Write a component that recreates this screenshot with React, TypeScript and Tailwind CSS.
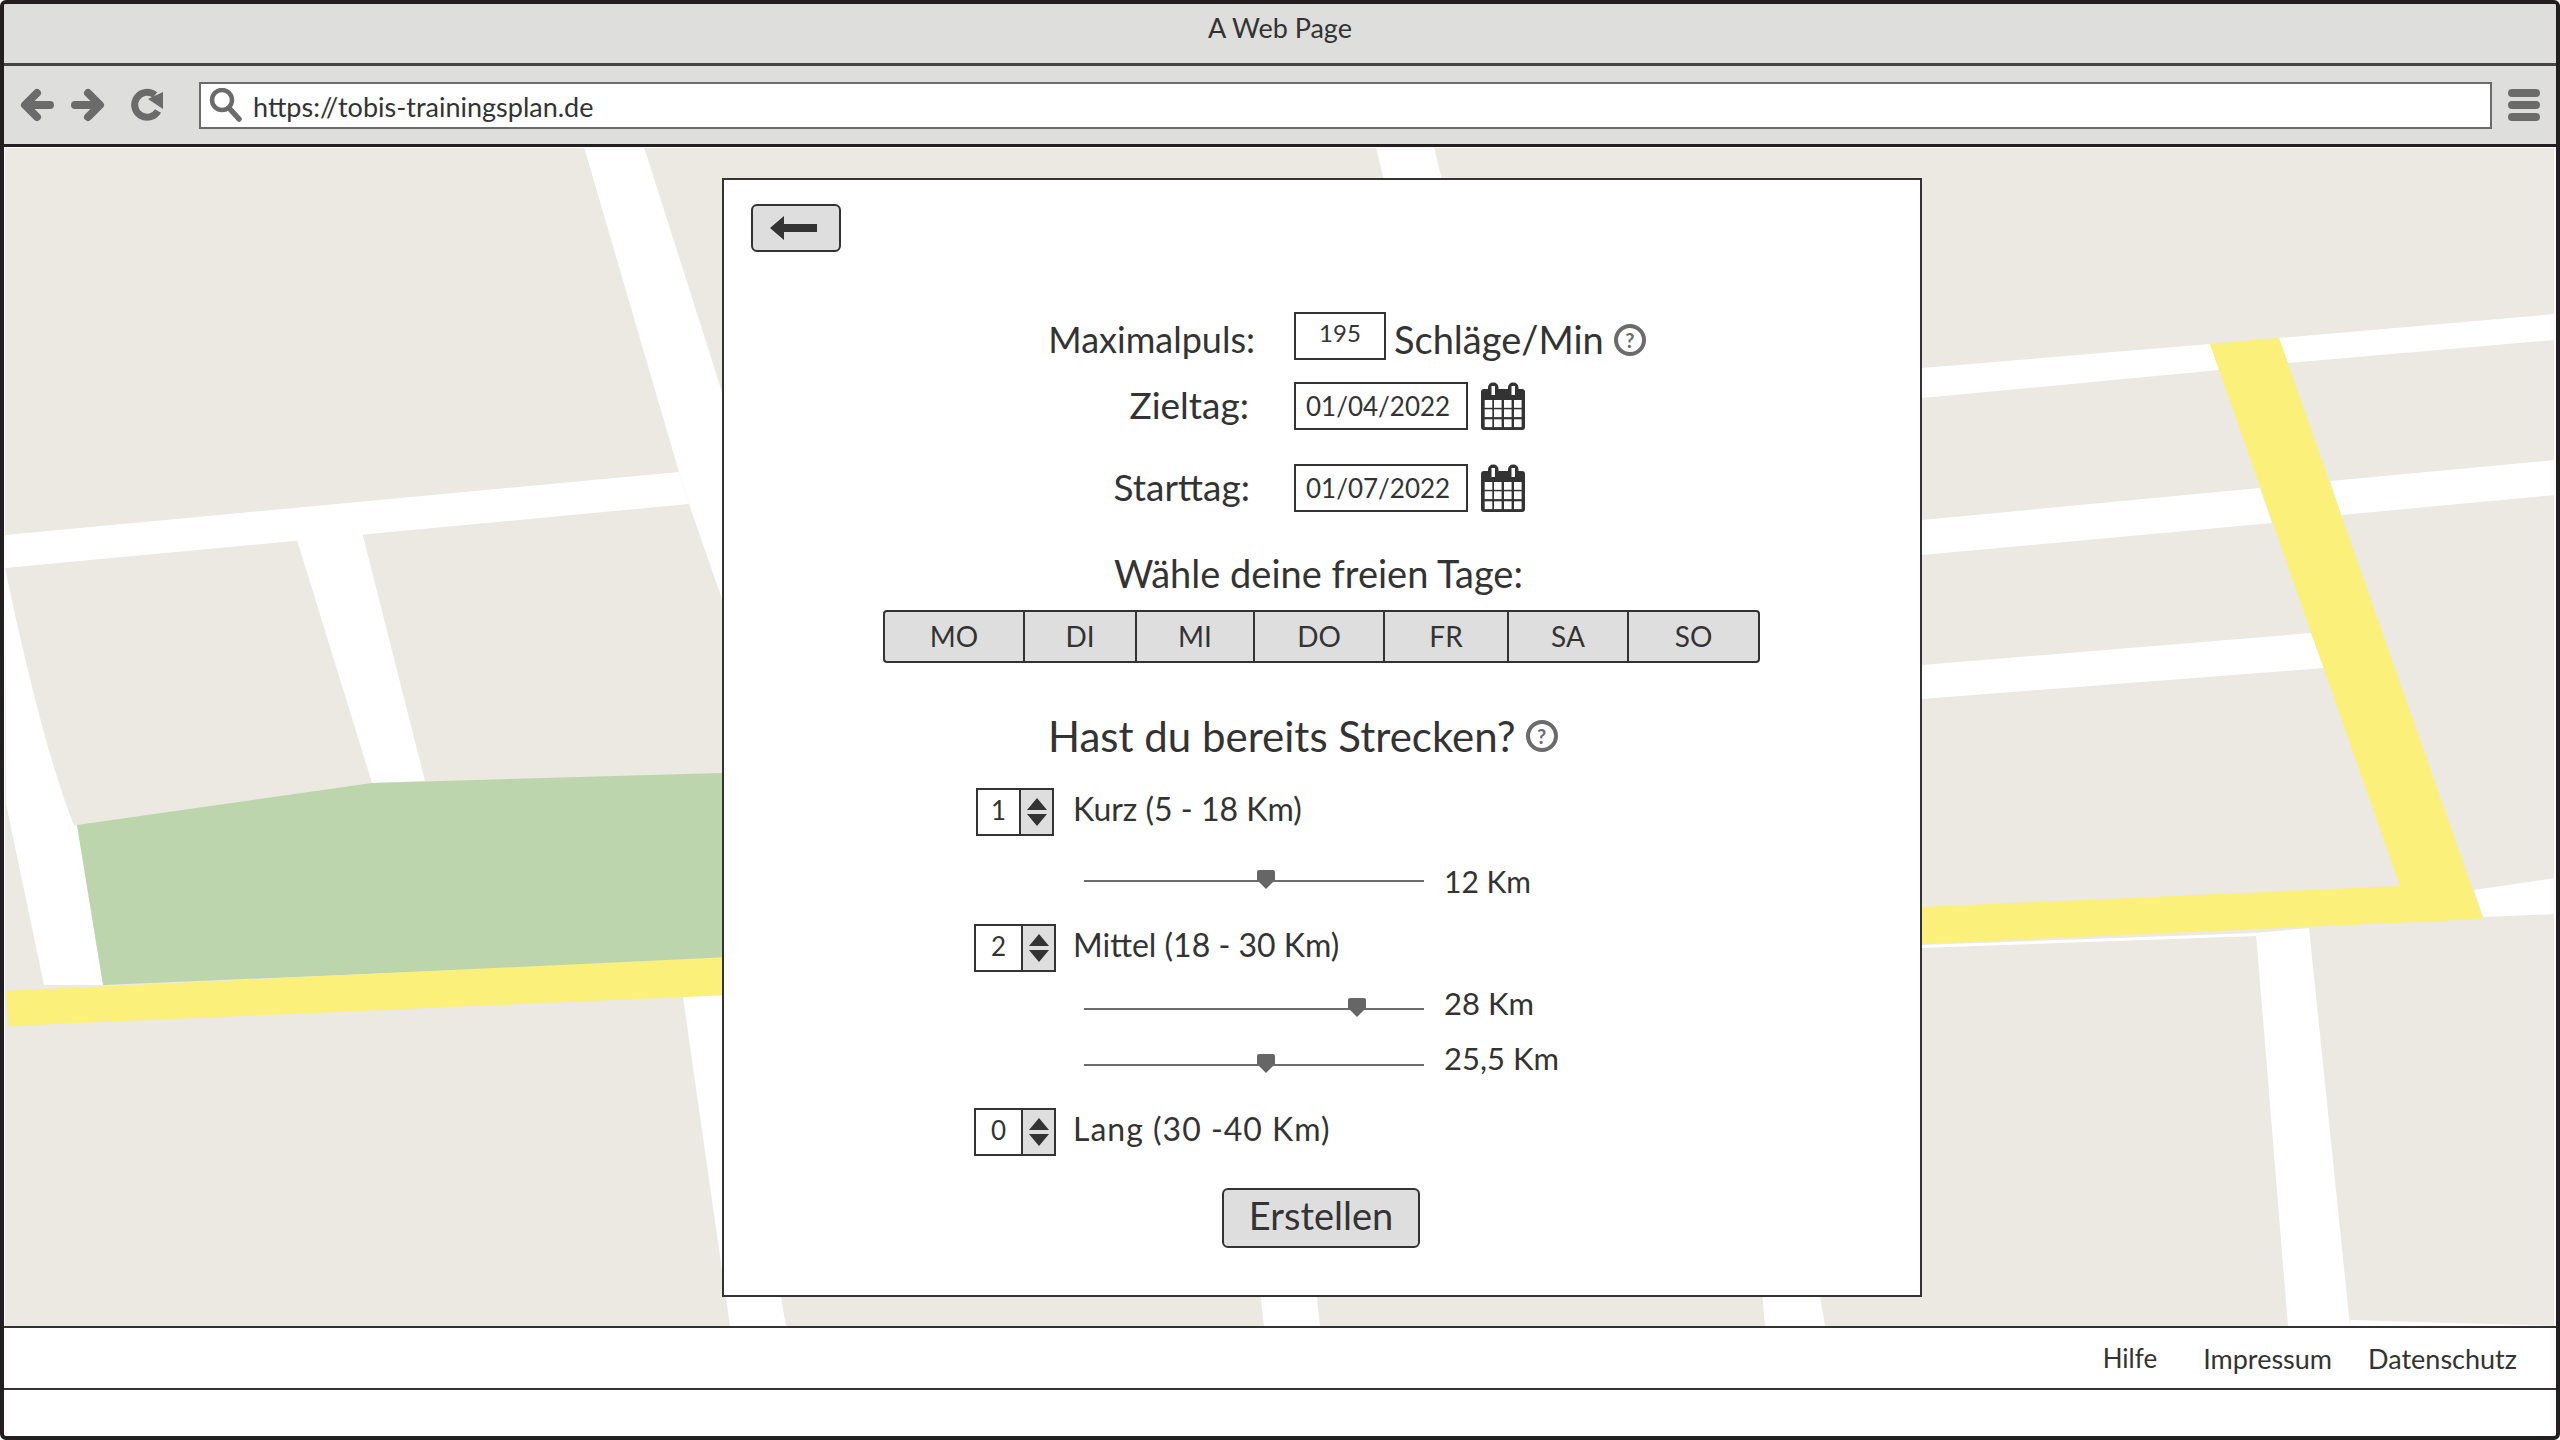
const dayTabs = [
  { label: "MO", width: "w-[140px]" },
  { label: "DI", width: "w-[112px]" },
  { label: "MI", width: "w-[118px]" },
  { label: "DO", width: "w-[130px]" },
  { label: "FR", width: "w-[124px]" },
  { label: "SA", width: "w-[120px]" },
  { label: "SO", width: "w-[129px]" },
];

const calendarCols = [3.7, 13, 23, 33];
const calendarRows = [18, 27.3, 37.3];

function ToolbarIcons() {
  return (
    <svg width="150" height="40" viewBox="17 86 150 40" className="shrink-0 text-[#6b6b6b]">
      <g fill="none" stroke="currentColor" strokeWidth="8" strokeLinecap="round" strokeLinejoin="round">
        <path d="M37 94 L25 106 L37 118 M27 106 H50" />
        <path d="M88 94 L100 106 L88 118 M98 106 H75" />
        <path d="M155 96 A12.5 12.5 0 1 0 158 112" strokeLinecap="butt" strokeWidth="7" />
      </g>
      <path d="M163 93 V110 L148 100 Z" fill="currentColor" />
    </svg>
  );
}

function SearchIcon() {
  return (
    <svg width="34" height="34" viewBox="0 0 34 34" className="shrink-0 text-[#6b6b6b]">
      <circle cx="13" cy="12" r="10" fill="none" stroke="currentColor" strokeWidth="4.5" />
      <path d="M20 20 L30 31" stroke="currentColor" strokeWidth="5.5" strokeLinecap="round" />
    </svg>
  );
}

function MapBackground() {
  const road = "#ffffff";
  return (
    <svg className="absolute inset-0" width="2552" height="1179" viewBox="4 147 2552 1179">
      <rect x="5" y="148" width="2549" height="1178" fill="#ebe9e2" />
      <g fill={road}>
        <polygon points="584,147 644,147 722,392 722,599 689,504 679,472" />
        <polygon points="5,535 679,472 689,504 5,568" />
        <polygon points="297,540 362,532 425,781 372,783" />
        <path d="M5 568 Q40 735 70 815 Q74 829 77 825 L103 985 L44 985 L6 804 Z" />
        <polygon points="683,997 726,990 786,1326 730,1326" />
        <polygon points="1376,147 1434,147 1442,180 1384,180" />
        <polygon points="1922,368 2210,344 2219,370 1922,398" />
        <polygon points="2279,338 2555,314 2555,340 2288,363" />
        <polygon points="1922,520 2260,488 2272,523 1922,555" />
        <polygon points="2330,481 2555,460 2555,495 2341,515" />
        <polygon points="1922,665 2311,633 2324,668 1922,699" />
        <polygon points="2474,890 2555,878 2555,914 2483,917" />
        <polygon points="2256,933 2309,928 2350,1326 2288,1326" />
        <polygon points="1762,1290 1819,1290 1825,1326 1765,1326" />
        <polygon points="1260,1290 1316,1290 1320,1326 1264,1326" />
        <polygon points="1922,945 2256,933 2256,936 1922,948" />
        <polygon points="2350,1320 2555,1326 2350,1327" />
      </g>
      <polygon points="77,825 372,783 722,773 722,959 103,985" fill="#bdd5ac" />
      <g fill="#fbf07a">
        <polygon points="6,991 730,957 730,995 9,1026" />
        <polygon points="1900,908 2400,886 2210,344 2279,338 2483,919 1900,945" />
      </g>
    </svg>
  );
}

function BackArrow() {
  return (
    <svg width="48" height="24" viewBox="0 0 48 24" className="mr-[4px] text-[#333]">
      <path d="M0 12 L14 0 V8 H47 V16 H14 V24 Z" fill="currentColor" />
    </svg>
  );
}

function HelpIcon() {
  return (
    <span className="flex h-[32px] w-[32px] shrink-0 items-center justify-center rounded-full border-[4px] border-[#6b6b6b] text-[20px] font-bold leading-none text-[#6b6b6b]">
      ?
    </span>
  );
}

function CalendarIcon() {
  return (
    <svg width="45" height="48" viewBox="0 0 45 48" className="ml-[13px] shrink-0 text-[#333]">
      <rect x="0" y="7" width="44" height="41" rx="3" fill="currentColor" />
      <rect x="7" y="0.5" width="10.5" height="16" rx="5" fill="currentColor" />
      <rect x="27" y="0.5" width="10.5" height="16" rx="5" fill="currentColor" />
      <rect x="10.5" y="4" width="3.5" height="9" fill="#fff" />
      <rect x="30.5" y="4" width="3.5" height="9" fill="#fff" />
      {calendarRows.map((y) =>
        calendarCols.map((x) => <rect key={`${x}-${y}`} x={x} y={y} width="7.6" height="7.8" fill="#fff" />),
      )}
    </svg>
  );
}

function DateRow({ label, labelClass, value }: { label: string; labelClass: string; value: string }) {
  return (
    <div className="flex items-center">
      <span className={`text-right leading-none ${labelClass}`}>{label}</span>
      <div className="flex h-[48px] w-[174px] items-center border-2 border-[#333] bg-white pl-[10px] text-[26px] leading-none">
        {value}
      </div>
      <CalendarIcon />
    </div>
  );
}

function Spinner({ value, boxClass, inputClass }: { value: number; boxClass: string; inputClass: string }) {
  return (
    <div className={`flex h-[48px] border-2 border-[#333] ${boxClass}`}>
      <div className={`flex items-center justify-center border-r-2 border-[#333] pb-[4px] text-[26px] leading-none ${inputClass}`}>
        {value}
      </div>
      <div className="flex flex-1 items-center justify-center bg-[#dedede]">
        <svg width="20" height="28" viewBox="0 0 20 28" className="text-[#333]">
          <path d="M10 0 L20 12 H0 Z M0 16 H20 L10 28 Z" fill="currentColor" />
        </svg>
      </div>
    </div>
  );
}

function Slider({ thumbClass }: { thumbClass: string }) {
  return (
    <div className="relative h-[2px] w-[340px] bg-[#6b6b6b]">
      <svg width="18" height="19" viewBox="0 0 18 19" className={`absolute top-[-10px] ${thumbClass}`}>
        <path d="M0 2 Q0 0 2 0 H16 Q18 0 18 2 V10 L9 19 L0 10 Z" fill="#666" />
      </svg>
    </div>
  );
}

export default function App() {
  return (
    <div
      className="flex h-[1440px] w-[2560px] flex-col overflow-hidden rounded-md border-4 border-[#231f20] bg-white text-[#333]"
      style={{ fontFamily: "Lato, 'Noto Sans', sans-serif" }}
    >
      <div className="flex h-[62px] shrink-0 items-center justify-center border-b-[3px] border-[#444] bg-[#dededd] pb-[10px] text-[27px]">
        A Web Page
      </div>

      <div className="flex h-[81px] shrink-0 items-center border-b-[3px] border-[#231f20] bg-[#dededd]">
        <div className="ml-[13px]">
          <ToolbarIcons />
        </div>
        <div className="ml-[32px] flex h-[47px] w-[2293px] items-center border-2 border-[#6b6b6b] bg-white pl-[8px]">
          <SearchIcon />
          <span className="ml-[10px] mt-[3px] text-[27px] leading-none">https://tobis-trainingsplan.de</span>
        </div>
        <div className="ml-[16px] flex w-[32px] flex-col gap-[4px]">
          <div className="h-[8px] rounded-full bg-[#6b6b6b]" />
          <div className="h-[8px] rounded-full bg-[#6b6b6b]" />
          <div className="h-[8px] rounded-full bg-[#6b6b6b]" />
        </div>
      </div>

      <div className="relative h-[1181px] shrink-0 border-b-2 border-[#333]">
        <MapBackground />
        <div className="relative ml-[718px] mt-[31px] h-[1119px] w-[1200px] border-2 border-[#333] bg-white">
          <button className="ml-[27px] mt-[24px] flex h-[48px] w-[90px] items-center justify-center rounded-md border-2 border-[#333] bg-[#dedede]">
            <BackArrow />
          </button>

          <div className="mt-[60px] flex h-[48px] items-center">
            <span className="mt-[6px] w-[531px] text-right text-[36px] leading-none">Maximalpuls:</span>
            <div className="ml-[39px] flex h-[48px] w-[92px] items-center justify-center border-2 border-[#333] pb-[6px] text-[24px] leading-none">
              195
            </div>
            <span className="ml-[8px] mt-[6px] text-[38px] leading-none">Schläge/Min</span>
            <span className="ml-[10px] mt-[8px]">
              <HelpIcon />
            </span>
          </div>

          <div className="mt-[22px]">
            <DateRow label="Zieltag:" labelClass="w-[525px] mr-[45px] mb-[4px] text-[37px]" value="01/04/2022" />
          </div>
          <div className="mt-[34px]">
            <DateRow label="Starttag:" labelClass="w-[526px] mr-[44px] mb-[4px] text-[37px]" value="01/07/2022" />
          </div>

          <div className="ml-[390px] mt-[39px] flex h-[48px] items-center pb-[4px] text-[38px] leading-none">
            Wähle deine freien Tage:
          </div>

          <div className="ml-[159px] mt-[11px] flex h-[53px] w-[877px] overflow-hidden rounded-[4px] border-2 border-[#333] bg-[#dedede]">
            {dayTabs.map((day, i) => (
              <div
                key={day.label}
                className={`flex items-center justify-center pb-[2px] text-[28px] leading-none ${day.width} ${
                  i < dayTabs.length - 1 ? "border-r-2 border-[#333]" : ""
                }`}
              >
                {day.label}
              </div>
            ))}
          </div>

          <div className="ml-[324px] mt-[49px] flex h-[48px] items-center text-[42px] leading-none">
            Hast du bereits Strecken?
            <span className="ml-[10px]">
              <HelpIcon />
            </span>
          </div>

          <div className="ml-[252px] mt-[28px] flex items-center">
            <Spinner value={1} boxClass="w-[78px]" inputClass="w-[43px]" />
            <span className="mb-[6px] ml-[19px] text-[32px] leading-none">Kurz (5 - 18 Km)</span>
          </div>

          <div className="ml-[360px] mt-[27px] flex h-[36px] items-center">
            <Slider thumbClass="left-[173px]" />
            <span className="ml-[20px] text-[30px] leading-none">12 Km</span>
          </div>

          <div className="ml-[250px] mt-[25px] flex items-center">
            <Spinner value={2} boxClass="w-[82px]" inputClass="w-[47px]" />
            <span className="mb-[6px] ml-[17px] text-[32px] leading-none">Mittel (18 - 30 Km)</span>
          </div>

          <div className="ml-[360px] mt-[19px] flex h-[36px] items-center">
            <Slider thumbClass="left-[264px]" />
            <span className="mb-[12px] ml-[20px] text-[31px] leading-none">28 Km</span>
          </div>

          <div className="ml-[360px] mt-[20px] flex h-[36px] items-center">
            <Slider thumbClass="left-[173px]" />
            <span className="mb-[14px] ml-[20px] text-[31px] leading-none">25,5 Km</span>
          </div>

          <div className="ml-[250px] mt-[25px] flex items-center">
            <Spinner value={0} boxClass="w-[82px]" inputClass="w-[47px]" />
            <span className="mb-[6px] ml-[17px] text-[32px] leading-none tracking-[1px]">Lang (30 -40 Km)</span>
          </div>

          <button className="ml-[498px] mt-[32px] flex h-[60px] w-[198px] items-center justify-center rounded-md border-2 border-[#333] bg-[#dedede] pb-[6px] text-[38px] leading-none">
            Erstellen
          </button>
        </div>
      </div>

      <div className="flex h-[62px] shrink-0 items-center justify-end border-b-2 border-[#333] pr-[39px] text-[27px] leading-none">
        <span className="text-[26px]">Hilfe</span>
        <span className="ml-[46px]">Impressum</span>
        <span className="ml-[36px]">Datenschutz</span>
      </div>
    </div>
  );
}
